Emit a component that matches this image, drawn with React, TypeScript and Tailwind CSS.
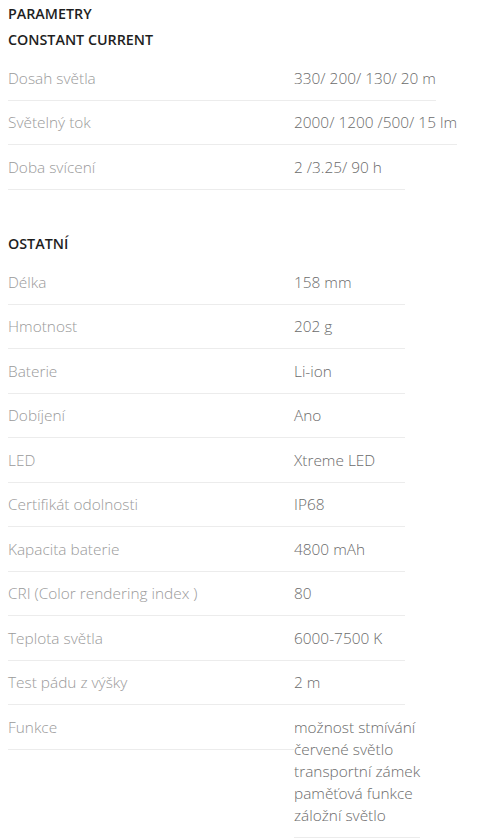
import React from "react";

type Row = { label: string; value: string[] };

const constantRows: Row[] = [
  { label: "Dosah světla", value: ["330/ 200/ 130/ 20 m"] },
  { label: "Světelný tok", value: ["2000/ 1200 /500/ 15 lm"] },
  { label: "Doba svícení", value: ["2 /3.25/ 90 h"] },
];

const otherRows: Row[] = [
  { label: "Délka", value: ["158 mm"] },
  { label: "Hmotnost", value: ["202 g"] },
  { label: "Baterie", value: ["Li-ion"] },
  { label: "Dobíjení", value: ["Ano"] },
  { label: "LED", value: ["Xtreme LED"] },
  { label: "Certifikát odolnosti", value: ["IP68"] },
  { label: "Kapacita baterie", value: ["4800 mAh"] },
  { label: "CRI (Color rendering index )", value: ["80"] },
  { label: "Teplota světla", value: ["6000-7500 K"] },
  { label: "Test pádu z výšky", value: ["2 m"] },
  {
    label: "Funkce",
    value: [
      "možnost stmívání",
      "červené světlo",
      "transportní zámek",
      "paměťová funkce",
      "záložní světlo",
    ],
  },
];

function Table({ rows }: { rows: Row[] }) {
  return (
    <div className="flex flex-col">
      {rows.map((r) => (
        <div key={r.label} className="flex items-start">
          <div className="w-[286px] shrink-0 border-b border-[#ececec] pt-[11.5px] pb-[10px] leading-[22px] text-[#9a9a9a]">
            {r.label}
          </div>
          <div className="min-w-[111px] border-b border-[#ececec] pt-[11.5px] pb-[10px] leading-[22px] text-[#6b6b6b] whitespace-nowrap">
            {r.value.map((v) => (
              <div key={v}>{v}</div>
            ))}
          </div>
        </div>
      ))}
    </div>
  );
}

export default function App() {
  return (
    <div
      className="min-h-[839px] bg-white pl-2 pt-[1px] text-[15.4px] font-light"
      style={{ fontFamily: '"Open Sans", "Noto Sans", sans-serif' }}
    >
      <h2 className="text-[14.3px] font-semibold leading-[26px] text-[#1e1e1e]">PARAMETRY</h2>
      <h3 className="text-[14.3px] font-semibold leading-[26px] text-[#1e1e1e]">CONSTANT CURRENT</h3>
      <div className="mt-[3px]">
        <Table rows={constantRows} />
      </div>
      <h3 className="mt-[41.5px] text-[14.3px] font-semibold leading-[26px] text-[#1e1e1e]">OSTATNÍ</h3>
      <div className="mt-[3px]">
        <Table rows={otherRows} />
      </div>
    </div>
  );
}
